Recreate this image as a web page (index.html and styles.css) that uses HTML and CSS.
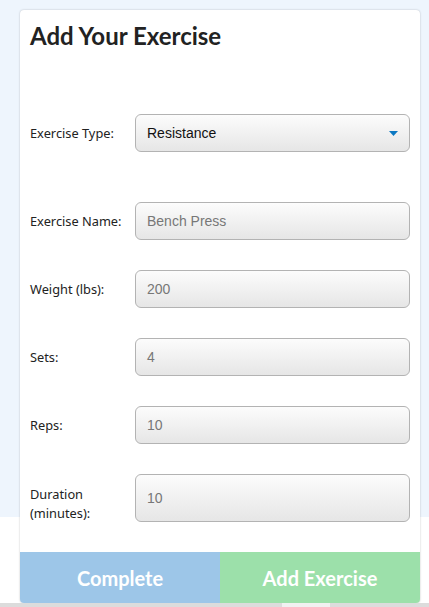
FILE: index.html
```html
<!DOCTYPE html>
<html>
<head>
<meta charset="utf-8">
<link rel="stylesheet" href="styles.css">
</head>
<body>
<div class="page">
  <div class="card">
    <h1 class="title">Add Your Exercise</h1>
    <form class="form">
      <div class="row row-type">
        <label class="label">Exercise Type:</label>
        <div class="field select">
          <span class="value">Resistance</span>
          <svg class="caret" width="9" height="5" viewBox="0 0 9 5"><path d="M0 0H9L4.5 5Z" fill="#0b78c2"/></svg>
        </div>
      </div>
      <div class="row">
        <label class="label">Exercise Name:</label>
        <div class="field"><span class="ph">Bench Press</span></div>
      </div>
      <div class="row">
        <label class="label">Weight (lbs):</label>
        <div class="field"><span class="ph">200</span></div>
      </div>
      <div class="row">
        <label class="label">Sets:</label>
        <div class="field"><span class="ph">4</span></div>
      </div>
      <div class="row">
        <label class="label">Reps:</label>
        <div class="field"><span class="ph">10</span></div>
      </div>
      <div class="row row-tall">
        <label class="label">Duration (minutes):</label>
        <div class="field"><span class="ph">10</span></div>
      </div>
    </form>
    <div class="actions">
      <button class="btn btn-complete" type="button">Complete</button>
      <button class="btn btn-add" type="button">Add Exercise</button>
    </div>
  </div>
</div>
<div class="footer">
  <span class="seg seg-a"></span><span class="seg seg-b"></span><span class="seg seg-c"></span>
</div>
</body>
</html>
```
FILE: styles.css
```css
html, body {
  margin: 0;
  padding: 0;
}
body {
  width: 429px;
  height: 607px;
  overflow: hidden;
  background: linear-gradient(#eef5fd 0, #eef5fd 517px, #ffffff 517px);
  font-family: "Noto Sans", "Open Sans", sans-serif;
}
.page {
  padding: 10px 9px 0 20px;
  height: 593px;
}
.card {
  width: 400px;
  height: 593px;
  box-sizing: border-box;
  background: #fff;
  border-radius: 4px;
  box-shadow: 0 0 2px rgba(0,0,0,0.25);
  display: flex;
  flex-direction: column;
  overflow: hidden;
}
.title {
  margin: 0;
  padding: 11px 10px 0;
  font-family: Lato, sans-serif;
  font-weight: 700;
  font-size: 24px;
  line-height: 30px;
  color: #222;
}
.form {
  display: flex;
  flex-direction: column;
  gap: 30px;
  padding: 63px 10px 0 10px;
  flex: 1;
}
.row {
  display: flex;
  align-items: center;
  height: 38px;
}
.row-type {
  margin-bottom: 20px;
}
.row-tall {
  height: 48px;
}
.row-tall .label {
  padding-top: 12px;
}
.label {
  width: 105px;
  flex: none;
  font-size: 12.8px;
  line-height: 19px;
  color: #222;
}
.field {
  flex: 1;
  align-self: stretch;
  box-sizing: border-box;
  border: 1px solid #b3b3b3;
  border-radius: 6px;
  background: linear-gradient(#fcfcfc, #e6e6e6);
  display: flex;
  align-items: center;
  padding: 0 11px;
  font-family: "Liberation Sans", Arial, sans-serif;
  font-size: 14px;
}
.ph {
  color: #777;
}
.value {
  color: #111;
  flex: 1;
}
.actions {
  display: flex;
  height: 51px;
}
.btn {
  flex: 1;
  border: 0;
  margin: 0;
  font-family: Lato, sans-serif;
  font-weight: 700;
  font-size: 20px;
  color: #fff;
}
.btn-complete {
  background: #9dc6e8;
}
.btn-add {
  background: #9ce0aa;
}
.footer {
  display: flex;
  height: 4px;
}
.seg {
  display: block;
  height: 4px;
}
.seg-a { width: 282px; background: #dcdcdc; }
.seg-b { width: 48px; background: #f1f1f1; }
.seg-c { flex: 1; background: #dcdcdc; }
```
